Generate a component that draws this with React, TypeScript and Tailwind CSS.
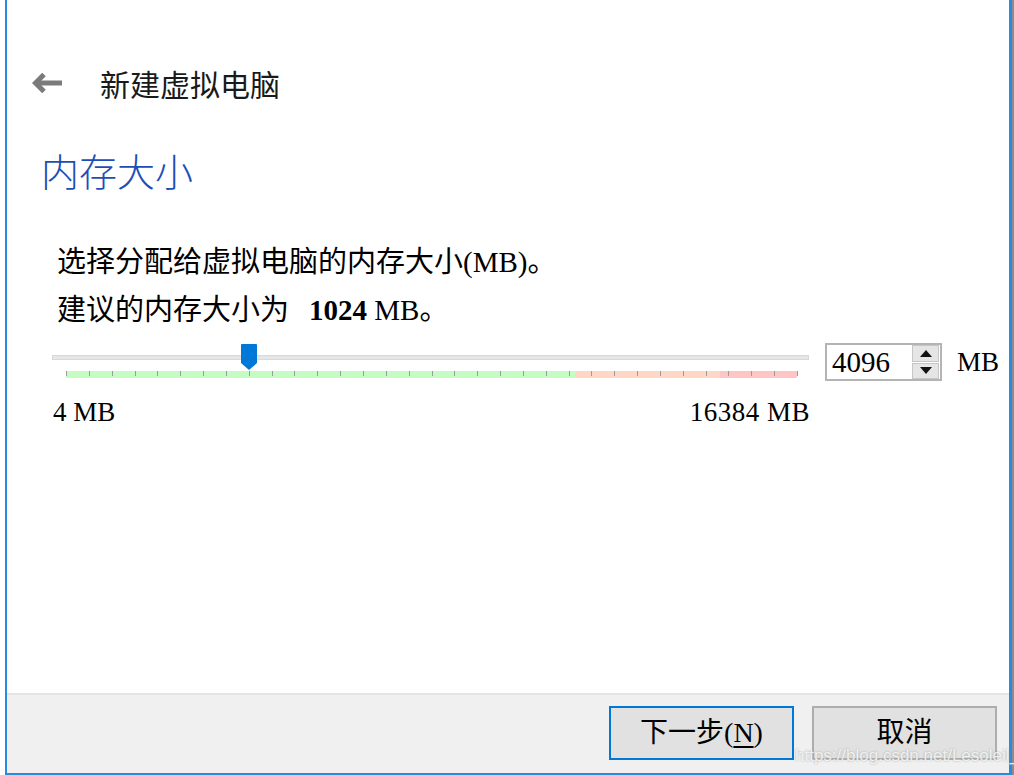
import React from 'react'

const serif = { fontFamily: '"Liberation Serif", "Noto Sans CJK SC", serif' }
const sans = { fontFamily: '"Noto Sans CJK SC", "Noto Sans", sans-serif' }

const TRACK_W = 731
const TICKS = 33

function BackArrow() {
  return (
    <svg width="30" height="20" viewBox="0 0 30 20" className="shrink-0">
      <path d="M12 1.5 L3.5 10 L12 18.5" fill="none" stroke="#7b7b7b" strokeWidth="5" strokeLinejoin="miter" />
      <path d="M5 10 H30" stroke="#7b7b7b" strokeWidth="5" />
    </svg>
  )
}

function Slider({ value, max }: { value: number; max: number }) {
  const handleX = 14 + (TRACK_W * value) / max
  return (
    <div className="relative w-[757px] h-[38px] shrink-0">
      {/* groove */}
      <div className="absolute left-0 right-0 top-[12px] h-[5px] bg-[#e6e6e6] border border-[#d9d9d9]" />
      {/* coloured tick band */}
      <div className="absolute left-[14px] top-[28px] h-[7px] w-[731px] flex">
        <div className="w-[509px] bg-[#c4fcc4]" />
        <div className="w-[145px] bg-[#ffd7c4]" />
        <div className="flex-1 bg-[#ffc4c4]" />
      </div>
      {Array.from({ length: TICKS }).map((_, i) => (
        <div
          key={i}
          className="absolute top-[28px] h-[5px] w-px bg-[#9c9c9c]"
          style={{ left: 14 + Math.round((TRACK_W * i) / (TICKS - 1)) }}
        />
      ))}
      {/* handle */}
      <svg
        width="16"
        height="27"
        viewBox="0 0 16 27"
        className="absolute top-[1px]"
        style={{ left: handleX - 8 }}
      >
        <path d="M0 1 Q0 0 1 0 H15 Q16 0 16 1 V19 L8 26 L0 19 Z" fill="#0078d7" />
      </svg>
    </div>
  )
}

function SpinBox({ value }: { value: string }) {
  return (
    <div className="w-[117px] h-[38px] border-2 border-[#b4b4b4] bg-white flex items-center shrink-0">
      <span className="flex-1 pl-[5px] text-[29px] leading-none text-black" style={serif}>
        {value}
      </span>
      <div className="w-[27px] h-[34px] mr-[1px] flex flex-col gap-px">
        <div className="flex-1 bg-[#e5e5e5] border border-[#c6c6c6] flex items-center justify-center">
          <svg width="12" height="7" viewBox="0 0 12 7">
            <path d="M0 7 L6 0 L12 7 Z" fill="#111" />
          </svg>
        </div>
        <div className="flex-1 bg-[#e5e5e5] border border-[#c6c6c6] flex items-center justify-center">
          <svg width="12" height="7" viewBox="0 0 12 7">
            <path d="M0 0 L6 7 L12 0 Z" fill="#111" />
          </svg>
        </div>
      </div>
    </div>
  )
}

export default function App() {
  return (
    <div className="w-[1014px] h-[775px] bg-white flex overflow-hidden">
      <div className="ml-[5px] w-[1007px] h-full flex flex-col border-l-2 border-r-[3px] border-b-2 border-[#2a8ae0]">
        {/* page body */}
        <div className="flex-1 flex flex-col">
          {/* wizard title */}
          <div className="mt-[62px] h-[42px] flex items-center pl-[25px]">
            <BackArrow />
            <span className="ml-[38px] text-[30px] leading-none text-[#1a1a1a]" style={sans}>
              新建虚拟电脑
            </span>
          </div>

          <h1 className="mt-[42px] h-[48px] pl-[34px] flex items-center text-[38px] font-light text-[#1d4db5] leading-none" style={sans}>
            内存大小
          </h1>

          <div className="mt-[44px] pl-[50px] text-[29px] leading-[48px] text-black" style={serif}>
            <p>选择分配给虚拟电脑的内存大小(MB)。</p>
            <p>
              建议的内存大小为<b className="ml-[20px]">1024</b> MB。
            </p>
          </div>

          {/* slider + spin box */}
          <div className="mt-[9px] pl-[45px] flex items-center">
            <Slider value={4096} max={16384} />
            <div className="ml-[16px]">
              <SpinBox value="4096" />
            </div>
            <span className="ml-[15px] text-[27px] leading-none text-black" style={serif}>
              MB
            </span>
          </div>

          <div className="mt-[16px] ml-[46px] w-[757px] h-[30px] flex items-center justify-between text-[27px] text-black" style={serif}>
            <span>4 MB</span>
            <span className="tracking-[0.5px]">16384 MB</span>
          </div>
        </div>

        {/* button bar */}
        <div className="relative h-[80px] bg-[#f0f0f0] border-t-2 border-[#e4e4e4] flex justify-end items-start pt-[11px] pr-[12px] gap-[18px]">
          <button
            className="w-[185px] h-[54px] bg-[#e1e1e1] border-2 border-[#0078d7] text-[28px] text-black"
            style={serif}
          >
            下一步(<span className="underline underline-offset-4">N</span>)
          </button>
          <button
            className="w-[185px] h-[54px] bg-[#e1e1e1] border-2 border-[#adadad] text-[28px] text-black"
            style={serif}
          >
            取消
          </button>
          <span
            className="absolute left-[788px] top-[52px] text-[17px] leading-none text-white/80 [text-shadow:0_0_2px_#9a9a9a]"
            style={{ fontFamily: '"Liberation Sans", sans-serif' }}
          >
            https://blog.csdn.net/Lesoleil_
          </span>
        </div>
      </div>
      <div className="w-[2px] h-full bg-[#8c8c8c]" />
    </div>
  )
}
